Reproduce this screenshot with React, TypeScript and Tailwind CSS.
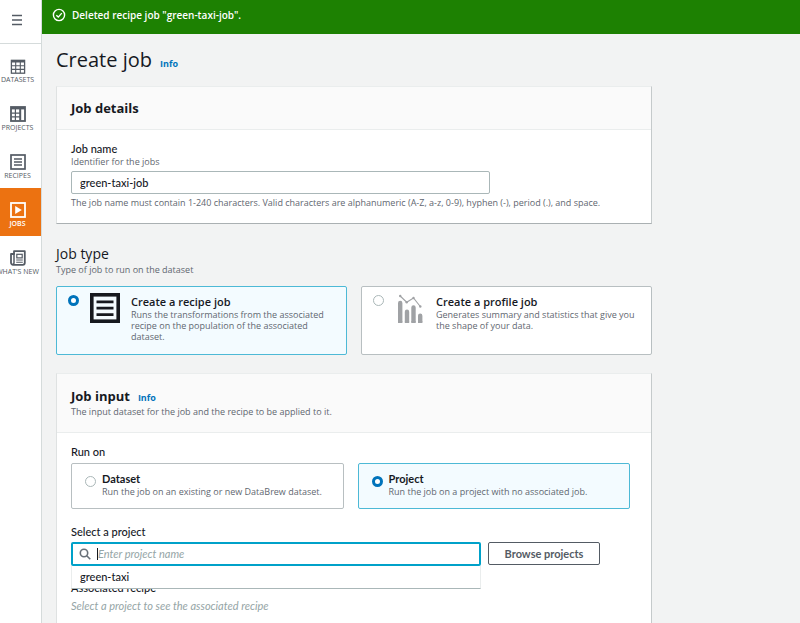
import type { ReactNode } from "react";

function DatasetsIcon() {
  return (
    <svg viewBox="0 0 16 16" className="size-4" fill="none" stroke="currentColor" aria-hidden="true">
      <rect x="1.4" y="2.4" width="13.2" height="12.8" strokeWidth="1.3" />
      <path d="M1 3.2h14" strokeWidth="2.6" />
      <path d="M1 7.8h14M1 11.4h14M5.7 4v11M10.3 4v11" strokeWidth="1.1" />
    </svg>
  );
}

function ProjectsIcon() {
  return (
    <svg viewBox="0 0 16 16" className="size-4" fill="none" stroke="currentColor" aria-hidden="true">
      <rect x="1" y="1" width="14" height="14" strokeWidth="1.8" />
      <path d="M1 2.2h14" strokeWidth="2.4" />
      <path d="M1.5 7.2h8.5M1.5 10.8h8.5M5.4 3v11.5" strokeWidth="1.2" />
      <path d="M10.2 3v11.5" strokeWidth="2" />
    </svg>
  );
}

function RecipesIcon() {
  return (
    <svg viewBox="0 0 16 16" className="size-4" fill="none" stroke="currentColor" aria-hidden="true">
      <rect x="1" y="1" width="14" height="14" strokeWidth="1.7" />
      <path d="M4 5h8M4 8h8M4 11h8" strokeWidth="1.5" />
    </svg>
  );
}

function JobsIcon() {
  return (
    <svg viewBox="0 0 16 16" className="size-4" fill="none" stroke="currentColor" aria-hidden="true">
      <rect x="1" y="1" width="14" height="14" strokeWidth="1.8" />
      <path d="M5.2 4v8l6.6-4z" fill="currentColor" stroke="none" />
    </svg>
  );
}

function NewsIcon() {
  return (
    <svg viewBox="0 0 16 16" className="size-4" fill="none" stroke="currentColor" aria-hidden="true">
      <path d="M4 1.2h10.8v11.6a2 2 0 0 1-2 2H3a2 2 0 0 1-2-2V4h3z" strokeWidth="1.8" strokeLinejoin="round" />
      <path d="M4 3v9.5a1.5 1.5 0 0 1-1.5 1.8" strokeWidth="1.5" />
      <rect x="6.8" y="4.3" width="5.4" height="3.6" strokeWidth="1.2" />
      <path d="M6.2 10h6.6M6.2 12.2h6.6" strokeWidth="1.1" />
    </svg>
  );
}

function RecipeJobIcon() {
  return (
    <svg viewBox="0 0 30 30" className="size-[30px]" fill="none" stroke="#16191f" aria-hidden="true">
      <rect x="1.8" y="1.8" width="26.4" height="26.4" strokeWidth="3.6" />
      <path d="M6.5 8.8h17M6.5 15.2h17M6.5 21.6h17" strokeWidth="2.8" />
    </svg>
  );
}

function ProfileJobIcon() {
  return (
    <svg viewBox="0 0 30 30" className="size-[30px]" fill="none" stroke="#a0a2a5" aria-hidden="true">
      <path d="M5.2 10v18M12 18.7v9.3M18.5 14.5v13.5M25.2 22.7v5.3" strokeWidth="4.4" strokeLinecap="round" />
      <path d="M3 29h4.4M9.8 29h4.4M16.3 29h4.4M23 29h4.4" strokeWidth="2" />
      <path d="M5.2 3l6.5 6.2 6.8-4.2 6.8 8.5" strokeWidth="1.1" />
      <g fill="#a0a2a5" stroke="none">
        <circle cx="5.2" cy="3" r="1.2" />
        <circle cx="11.7" cy="9.2" r="1.2" />
        <circle cx="18.5" cy="5" r="1.2" />
        <circle cx="25.3" cy="13.5" r="1.2" />
      </g>
    </svg>
  );
}

function NavItem({ icon, label, active = false }: { icon: ReactNode; label: string; active?: boolean }) {
  return (
    <a
      href="#"
      aria-current={active ? "page" : undefined}
      className={`flex h-12 flex-col items-center gap-0.5 pt-3.5 pr-1.5 text-[7px] leading-2 whitespace-nowrap ${
        active ? "bg-[#ec7211] font-semibold text-white" : "text-[#545b64]"
      }`}
    >
      {icon}
      <span>{label}</span>
    </a>
  );
}

function InfoLink() {
  return (
    <a href="#" className="text-[9px] leading-3 font-bold text-[#0073bb]">
      Info
    </a>
  );
}

function Radio({ id, name, checked = false }: { id: string; name: string; checked?: boolean }) {
  return (
    <input
      type="radio"
      id={id}
      name={name}
      defaultChecked={checked}
      className="size-[11px] shrink-0 appearance-none rounded-full border border-[#aab7b8] bg-white checked:border-[3px] checked:border-[#0073bb]"
    />
  );
}

const tile = "flex flex-1 rounded-xs border border-[#b8bfc1] bg-white has-checked:border-[#4db9d6] has-checked:bg-[#f3fbff]";
const hint = "text-[9px] leading-3 text-[#5f6770]";
const field = "font-['Lato','Noto_Sans',sans-serif] text-[11px] leading-3.5";
const label = `block ${field} font-medium text-[#16191f]`;
const card = "border border-t-[#eaeded] border-r-[#c5cacb] border-b-[#aab0b2] border-l-[#dfe2e2] bg-white";

function JobTypeTile({ id, title, text, icon, checked }: { id: string; title: string; text: string; icon: ReactNode; checked?: boolean }) {
  return (
    <label htmlFor={id} className={`${tile} h-[69px] gap-[11px] px-[11px] pt-2`}>
      <Radio id={id} name="job-type" checked={checked} />
      <span className="-mt-0.5 shrink-0">{icon}</span>
      <span>
        <span className="block text-[11px] leading-3.5 font-semibold text-[#16191f]">{title}</span>
        <span className="block text-[9px] leading-[11px] text-[#5f6770]">{text}</span>
      </span>
    </label>
  );
}

function RunOnTile({ id, title, text, checked }: { id: string; title: string; text: string; checked?: boolean }) {
  return (
    <label htmlFor={id} className={`${tile} h-[46px] gap-1.5 px-[13px] pt-2`}>
      <span className="flex h-[18px] items-center">
        <Radio id={id} name="run-on" checked={checked} />
      </span>
      <span>
        <span className={`block ${field} font-bold text-[#16191f]`}>{title}</span>
        <span className={`block ${hint}`}>{text}</span>
      </span>
    </label>
  );
}

export default function App() {
  return (
    <div className="flex h-screen overflow-hidden bg-[#f2f3f3] font-['Open_Sans','Noto_Sans',sans-serif] text-[#16191f]">
      <nav aria-label="Main" className="w-[42px] shrink-0 border-r border-[#d5dbdb] bg-white">
        <button type="button" aria-label="Open menu" className="flex h-11 w-full items-center justify-center border-b border-[#d5dbdb] pr-2 pb-1 text-[#545b64]">
          <svg viewBox="0 0 12 12" className="size-3" fill="none" stroke="currentColor" aria-hidden="true">
            <path d="M1 1.5h10M1 6h10M1 10.5h10" strokeWidth="1.4" />
          </svg>
        </button>
        <NavItem icon={<DatasetsIcon />} label="DATASETS" />
        <NavItem icon={<ProjectsIcon />} label="PROJECTS" />
        <NavItem icon={<RecipesIcon />} label="RECIPES" />
        <NavItem icon={<JobsIcon />} label="JOBS" active />
        <NavItem icon={<NewsIcon />} label="WHAT'S NEW" />
      </nav>

      <div className="min-w-0 flex-1">
        <div role="status" className="flex h-[34px] items-center gap-1.5 bg-[#1d8102] px-2.5 pb-1 text-[10px] font-semibold text-white">
          <svg viewBox="0 0 14 14" className="size-3.5" fill="none" stroke="currentColor" strokeWidth="1.4" aria-hidden="true">
            <circle cx="7" cy="7" r="5.6" />
            <path d="M4.3 7.2l2 1.9 3.5-4" />
          </svg>
          Deleted recipe job "green-taxi-job".
        </div>

        <main className="max-w-[610px] pt-3 pl-3.5">
          <div className="mb-3 flex items-baseline gap-2">
            <h1 className="text-xl leading-7">Create job</h1>
            <InfoLink />
          </div>

          <section className={card}>
            <div className="border-b border-[#eaeded] bg-[#fafafa] px-3.5 py-3">
              <h2 className="text-[13px] leading-[18px] font-bold">Job details</h2>
            </div>
            <div className="px-3.5 pt-3 pb-3.5">
              <label htmlFor="job-name" className={label}>Job name</label>
              <p className={hint}>Identifier for the jobs</p>
              <input
                id="job-name"
                type="text"
                defaultValue="green-taxi-job"
                className={`my-[3px] block h-[23px] w-[74%] rounded-xs border border-[#aab7b8] bg-white px-2 ${field} font-medium`}
              />
              <p className={`${hint} whitespace-nowrap`}>
                The job name must contain 1-240 characters. Valid characters are alphanumeric (A-Z, a-z, 0-9), hyphen (-), period (.), and space.
              </p>
            </div>
          </section>

          <section className="mt-5">
            <h2 className="text-sm leading-5">Job type</h2>
            <p className={hint}>Type of job to run on the dataset</p>
            <div className="mt-2.5 flex gap-3.5">
              <JobTypeTile
                id="recipe-job"
                title="Create a recipe job"
                text="Runs the transformations from the associated recipe on the population of the associated dataset."
                icon={<RecipeJobIcon />}
                checked
              />
              <JobTypeTile
                id="profile-job"
                title="Create a profile job"
                text="Generates summary and statistics that give you the shape of your data."
                icon={<ProfileJobIcon />}
              />
            </div>
          </section>

          <section className={`${card} mt-[18px]`}>
            <div className="border-b border-[#eaeded] bg-[#fafafa] px-3.5 pt-3 pb-3.5">
              <div className="flex items-baseline gap-2">
                <h2 className="text-[13px] leading-5 font-bold">Job input</h2>
                <InfoLink />
              </div>
              <p className={hint}>The input dataset for the job and the recipe to be applied to it.</p>
            </div>
            <div className="pt-3 pr-[21px] pb-10 pl-3.5">
              <h3 className={label}>Run on</h3>
              <div className="mt-1 mb-4 flex gap-3.5">
                <RunOnTile id="run-dataset" title="Dataset" text="Run the job on an existing or new DataBrew dataset." />
                <RunOnTile id="run-project" title="Project" text="Run the job on a project with no associated job." checked />
              </div>

              <label htmlFor="project" className={label}>Select a project</label>
              <div className="mt-[3px] flex gap-[7px] pr-[30px]">
                <div className="relative flex-1">
                  <div className="flex h-6 items-center rounded-xs border-2 border-[#00a1c9] bg-white pl-1.5">
                    <svg viewBox="0 0 12 12" className="mr-1.5 size-3" fill="none" stroke="#687078" strokeWidth="1.6" aria-hidden="true">
                      <circle cx="5" cy="5" r="3.7" />
                      <path d="M7.7 7.7l3.6 3.6" />
                    </svg>
                    <span className="h-3 w-px bg-[#16191f]" />
                    <input
                      id="project"
                      type="text"
                      role="combobox"
                      aria-expanded="true"
                      aria-controls="project-options"
                      placeholder="Enter project name"
                      className={`min-w-0 flex-1 bg-transparent ${field} outline-none placeholder:text-[#95a5a6] placeholder:italic`}
                    />
                  </div>
                  <ul
                    id="project-options"
                    role="listbox"
                    className="absolute inset-x-0 top-full border border-t-0 border-[#eaeded] border-b-[#aab7b8] bg-white"
                  >
                    <li role="option" aria-selected="false" className={`px-2 py-1 ${field} font-medium`}>green-taxi</li>
                  </ul>
                </div>
                <button type="button" className={`h-[23px] w-28 rounded-xs border border-[#545b64] bg-white ${field} font-bold text-[#545b64]`}>
                  Browse projects
                </button>
              </div>

              <h3 className={`${label} mt-[15px]`}>Associated recipe</h3>
              <p className={`mt-1 ${field} text-[#95a5a6] italic`}>Select a project to see the associated recipe</p>
            </div>
          </section>
        </main>
      </div>
    </div>
  );
}
